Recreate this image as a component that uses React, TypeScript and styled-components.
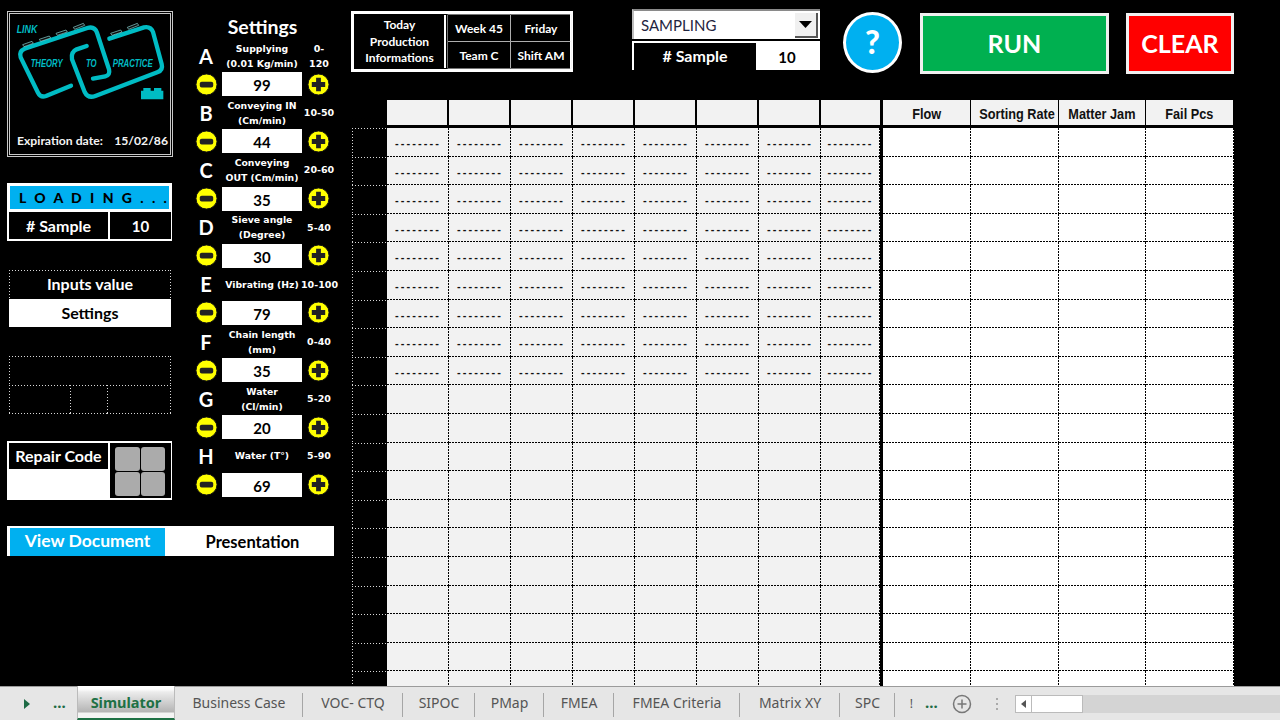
import styled, { createGlobalStyle, css } from "styled-components";
import { Fragment } from "react";

const GlobalStyle = createGlobalStyle`
  html, body { margin: 0; padding: 0; background: #000; }
  body { width: 1280px; height: 720px; overflow: hidden; font-family: "Lato", "Liberation Sans", sans-serif; }
  * { box-sizing: border-box; }
`;

const SETTINGS = [
  { letter: "A", label: ["Supplying", "(0.01 Kg/min)"], range: ["0-", "120"], value: 99 },
  { letter: "B", label: ["Conveying IN", "(Cm/min)"], range: ["10-50"], value: 44 },
  { letter: "C", label: ["Conveying", "OUT (Cm/min)"], range: ["20-60"], value: 35 },
  { letter: "D", label: ["Sieve angle", "(Degree)"], range: ["5-40"], value: 30 },
  { letter: "E", label: ["Vibrating (Hz)"], range: ["10-100"], value: 79 },
  { letter: "F", label: ["Chain length", "(mm)"], range: ["0-40"], value: 35 },
  { letter: "G", label: ["Water", "(Cl/min)"], range: ["5-20"], value: 20 },
  { letter: "H", label: ["Water (T°)"], range: ["5-90"], value: 69 },
];

const RESULTS = ["Flow", "Sorting Rate", "Matter Jam", "Fail Pcs"];
const ROW_COUNT = 20;
const FILLED_ROWS = 9;

const TABS = [
  { name: "Business Case", width: 128 },
  { name: "VOC- CTQ", width: 100 },
  { name: "SIPOC", width: 72 },
  { name: "PMap", width: 69 },
  { name: "FMEA", width: 70 },
  { name: "FMEA Criteria", width: 126 },
  { name: "Matrix XY", width: 100 },
  { name: "SPC", width: 55 },
];

// dotted white frame, the browser's own 1px dotted reads as a solid line
const dots = (sides: string[]) => {
  const h = "repeating-linear-gradient(90deg, #d8d8d8 0 1px, transparent 1px 3px)";
  const v = "repeating-linear-gradient(180deg, #d8d8d8 0 1px, transparent 1px 3px)";
  const layers: Record<string, string> = {
    top: `${h} top left / 100% 1px no-repeat`,
    bottom: `${h} bottom left / 100% 1px no-repeat`,
    left: `${v} top left / 1px 100% no-repeat`,
    right: `${v} top right / 1px 100% no-repeat`,
  };
  return css`
    background: ${sides.map((s) => layers[s]).join(", ")};
  `;
};

// sheet cell edges, 2 on 1 off
const cellEdges = css`
  background-image: repeating-linear-gradient(90deg, #000 0 2px, transparent 2px 3px),
    repeating-linear-gradient(180deg, #000 0 2px, transparent 2px 3px);
  background-position: bottom left, top right;
  background-size: 100% 1px, 1px 100%;
  background-repeat: no-repeat;
`;

const Logo = () => (
  <LogoSvg viewBox="30 42 480 279">
    <g fill="none" stroke="#00bcc4" strokeWidth="13" strokeLinecap="round" strokeLinejoin="round">
      <path d="M213 257 L138 288 Q122 294 114 278 L62 172 Q56 154 74 146 L262 84 Q284 78 291 98 L327 208 Q331 226 316 229 L279 236" />
      <path d="M328 116 L432 82 Q452 78 459 96 L485 192 Q490 210 472 217 L286 288 Q264 296 254 276 L216 178 Q212 156 230 148 L260 138" />
    </g>
    <g fill="#0b0b0b" stroke="#8fdcdc" strokeWidth="2">
      <path d="M68 134 L96 124 L100 130 L72 140 Z" />
      <path d="M118 118 L148 108 L152 114 L122 124 Z" />
      <path d="M168 100 L198 90 L202 96 L172 106 Z" />
      <path d="M220 82 L250 70 L254 76 L224 88 Z" />
      <path d="M332 100 L362 90 L366 96 L336 106 Z" />
      <path d="M382 82 L412 70 L416 76 L386 88 Z" />
    </g>
    <LogoText x="50" y="100" fontSize="30" textLength="62" lengthAdjust="spacingAndGlyphs">LINK</LogoText>
    <LogoText x="92" y="200" fontSize="34" textLength="96" lengthAdjust="spacingAndGlyphs">THEORY</LogoText>
    <LogoText x="258" y="200" fontSize="34" textLength="32" lengthAdjust="spacingAndGlyphs">TO</LogoText>
    <LogoText x="338" y="200" fontSize="34" textLength="120" lengthAdjust="spacingAndGlyphs">PRACTICE</LogoText>
    <path
      fill="#00bcc4"
      d="M423 272 H430 V264 H452 V272 H462 V264 H484 V272 H490 V298 H423 Z"
    />
  </LogoSvg>
);

const MinusIcon = () => (
  <RoundSvg viewBox="0 0 24 24">
    <circle cx="12" cy="12" r="11" fill="#ffff00" stroke="#111" strokeWidth="1" />
    <rect x="5" y="9" width="14" height="6" rx="2" fill="#222" />
  </RoundSvg>
);

const PlusIcon = () => (
  <RoundSvg viewBox="0 0 24 24">
    <circle cx="12" cy="12" r="11" fill="#ffff00" stroke="#111" strokeWidth="1" />
    <path
      fill="#222"
      d="M9.5 5 H14.5 V9.5 H19 V14.5 H14.5 V19 H9.5 V14.5 H5 V9.5 H9.5 Z"
    />
  </RoundSvg>
);

const App = () => {
  const rows = Array.from({ length: ROW_COUNT }, (_, i) => i);
  const columns = Array.from({ length: 8 }, (_, i) => i);

  return (
    <Page>
      <GlobalStyle />
      <Main>
        <LeftPanel>
          <LogoCard>
            <Logo />
            <Expiry>
              <span>Expiration date:</span>
              <span>15/02/86</span>
            </Expiry>
          </LogoCard>

          <LoadingBlock>
            <LoadingBar>L O A D I N G . . .</LoadingBar>
            <SampleRow>
              <SampleName># Sample</SampleName>
              <SampleCount>10</SampleCount>
            </SampleRow>
          </LoadingBlock>

          <InputsBlock>
            <InputsTitle>Inputs value</InputsTitle>
            <InputsValue>Settings</InputsValue>
          </InputsBlock>

          <EmptyBlock>
            <EmptyWide />
            <EmptySplit>
              <EmptyCell $width={62} />
              <EmptyCell $width={38} />
              <EmptyCell $width={64} />
            </EmptySplit>
          </EmptyBlock>

          <RepairBlock>
            <RepairLabel>Repair Code</RepairLabel>
            <RepairKeys>
              <RepairKey />
              <RepairKey />
              <RepairKey />
              <RepairKey />
            </RepairKeys>
          </RepairBlock>
        </LeftPanel>

        <SettingsPanel>
          <SettingsTitle>Settings</SettingsTitle>
          <SettingsGrid>
            {SETTINGS.map((s) => (
              <Fragment key={s.letter}>
                <Letter>{s.letter}</Letter>
                <ParamLabel>
                  {s.label.map((line) => (
                    <div key={line}>{line}</div>
                  ))}
                </ParamLabel>
                <ParamRange>
                  {s.range.map((line) => (
                    <div key={line}>{line}</div>
                  ))}
                </ParamRange>
                <MinusIcon />
                <ParamValue>{s.value}</ParamValue>
                <PlusIcon />
              </Fragment>
            ))}
          </SettingsGrid>
        </SettingsPanel>

        <DocBar>
          <DocActive>View Document</DocActive>
          <DocOther>Presentation</DocOther>
        </DocBar>

        <RightPanel>
          <TopBar>
            <InfoTable>
              <InfoTitle>
                Today
                <br />
                Production
                <br />
                Informations
              </InfoTitle>
              <InfoCell>Week 45</InfoCell>
              <InfoCell>Friday</InfoCell>
              <InfoCell>Team C</InfoCell>
              <InfoCell>Shift AM</InfoCell>
            </InfoTable>

            <ModeBlock>
              <Dropdown>
                <span>SAMPLING</span>
                <DropdownButton>
                  <svg width="13" height="7" viewBox="0 0 13 7">
                    <path d="M0 0 H13 L6.5 7 Z" fill="#000" />
                  </svg>
                </DropdownButton>
              </Dropdown>
              <ModeSample>
                <ModeSampleName># Sample</ModeSampleName>
                <ModeSampleCount>10</ModeSampleCount>
              </ModeSample>
            </ModeBlock>

            <HelpButton>?</HelpButton>
            <ActionButton $bg="#00b050" $width={189} $gap={18}>RUN</ActionButton>
            <ActionButton $bg="#ff0000" $width={108} $gap={17}>CLEAR</ActionButton>
          </TopBar>

          <SheetGrid>
            <HeaderSpacer />
            {columns.map((c) => (
              <HeaderCell key={c} $last={c === 7} />
            ))}
            {RESULTS.map((r) => (
              <ResultHeader key={r}>
                <NarrowText>{r}</NarrowText>
              </ResultHeader>
            ))}
            {rows.map((r) => (
              <Fragment key={r}>
                <RowHead />
                {columns.map((c) => (
                  <DataCell key={c} $last={c === 7}>
                    {r < FILLED_ROWS ? "--------" : ""}
                  </DataCell>
                ))}
                {RESULTS.map((name) => (
                  <ResultCell key={name} />
                ))}
              </Fragment>
            ))}
          </SheetGrid>
        </RightPanel>
      </Main>

      <TabBar>
        <NavArrow>
          <svg width="6" height="10" viewBox="0 0 6 10">
            <path d="M0 0 L6 5 L0 10 Z" fill="#1e6b45" />
          </svg>
        </NavArrow>
        <MoreDots>...</MoreDots>
        <ActiveTab>Simulator</ActiveTab>
        {TABS.map((t) => (
          <SheetTab key={t.name} $width={t.width}>
            {t.name}
          </SheetTab>
        ))}
        <ClippedTab>!</ClippedTab>
        <MoreDots>...</MoreDots>
        <AddSheet>
          <svg width="20" height="20" viewBox="0 0 20 20">
            <circle cx="10" cy="10" r="8.5" fill="none" stroke="#777" strokeWidth="1.5" />
            <path d="M10 5.5 V14.5 M5.5 10 H14.5" stroke="#777" strokeWidth="1.5" />
          </svg>
        </AddSheet>
        <Grip>
          <GripDot />
          <GripDot />
          <GripDot />
        </Grip>
        <ScrollTrack>
          <ScrollLeft>
            <svg width="5" height="8" viewBox="0 0 5 8">
              <path d="M5 0 L0 4 L5 8 Z" fill="#555" />
            </svg>
          </ScrollLeft>
          <ScrollThumb />
        </ScrollTrack>
      </TabBar>
    </Page>
  );
};

export default App;

const Page = styled.div`
  display: flex;
  flex-direction: column;
  width: 1280px;
  height: 720px;
  background: #000;
  overflow: hidden;
`;

const Main = styled.div`
  display: grid;
  grid-template-columns: 188px 163px 1fr;
  grid-template-rows: 517px 1fr;
  height: 686px;
  flex-shrink: 0;
  overflow: hidden;
  color: #fff;
`;

const LeftPanel = styled.div`
  display: flex;
  flex-direction: column;
  padding: 11px 0 0 7px;
`;

const LogoCard = styled.div`
  display: flex;
  flex-direction: column;
  width: 166px;
  height: 146px;
  border: 3px double #c8c8c8;
`;

const LogoSvg = styled.svg`
  display: block;
  width: 160px;
  height: 93px;
`;

const LogoText = styled.text`
  font-family: "Liberation Sans", sans-serif;
  font-style: italic;
  font-weight: 700;
  fill: #00bcc4;
`;

const Expiry = styled.div`
  display: flex;
  justify-content: space-between;
  margin-top: 26px;
  padding: 0 2px 0 7px;
  font-size: 12.2px;
  font-weight: 700;
  color: #f4f4f4;
`;

const LoadingBlock = styled.div`
  display: flex;
  flex-direction: column;
  width: 165px;
  margin-top: 26px;
`;

const LoadingBar = styled.div`
  height: 29px;
  padding-left: 9px;
  border: 3px solid #fff;
  background: #00b0f0;
  background-clip: padding-box;
  color: #000;
  font-size: 14px;
  font-weight: 900;
  letter-spacing: 2.5px;
  line-height: 23px;
  white-space: nowrap;
`;

const SampleRow = styled.div`
  display: grid;
  grid-template-columns: 101px 1fr;
  height: 29px;
  border: 1px solid #fff;
  border-top: 0;
  border-bottom-width: 2px;
  border-left-width: 2px;
`;

const SampleName = styled.div`
  display: flex;
  align-items: center;
  justify-content: center;
  border-right: 2px solid #fff;
  font-size: 16px;
  font-weight: 700;
`;

const SampleCount = styled.div`
  display: flex;
  align-items: center;
  justify-content: center;
  font-size: 15px;
  font-weight: 700;
`;

const InputsBlock = styled.div`
  display: flex;
  flex-direction: column;
  width: 162px;
  margin: 29px 0 0 2px;
`;

const InputsTitle = styled.div`
  ${dots(["top", "left", "right"])}
  height: 29px;
  text-align: center;
  font-size: 16px;
  font-weight: 700;
  line-height: 28px;
`;

const InputsValue = styled.div`
  height: 28px;
  background: #fff;
  color: #000;
  text-align: center;
  font-size: 16px;
  font-weight: 700;
  line-height: 27px;
`;

const EmptyBlock = styled.div`
  display: flex;
  flex-direction: column;
  width: 162px;
  margin: 29px 0 0 2px;
`;

const EmptyWide = styled.div`
  ${dots(["top", "left", "right"])}
  height: 29px;
`;

const EmptySplit = styled.div`
  display: flex;
  height: 29px;
`;

const EmptyCell = styled.div<{ $width: number }>`
  ${dots(["top", "bottom", "left", "right"])}
  width: ${({ $width }) => $width}px;
  margin-right: -1px;
`;

const RepairBlock = styled.div`
  display: grid;
  grid-template-columns: 101px 1fr;
  width: 165px;
  height: 59px;
  margin-top: 27px;
  padding: 2px 1px 2px 2px;
  background: #fff;
`;

const RepairLabel = styled.div`
  height: 26px;
  margin-right: 2px;
  background: #000;
  color: #fff;
  text-align: center;
  font-size: 16px;
  font-weight: 700;
  line-height: 26px;
`;

const RepairKeys = styled.div`
  display: grid;
  grid-template-columns: 1fr 1fr;
  grid-template-rows: 1fr 1fr;
  gap: 1px;
  padding: 4px 6px 2px 5px;
  background: #000;
`;

const RepairKey = styled.div`
  border-radius: 3px;
  background: #ababab;
`;

const SettingsPanel = styled.div`
  display: flex;
  flex-direction: column;
  padding-left: 7px;
`;

const SettingsTitle = styled.div`
  height: 39px;
  width: 135px;
  padding-top: 14px;
  text-align: center;
  font-size: 19.5px;
  font-weight: 700;
  line-height: 26px;
`;

const SettingsGrid = styled.div`
  display: grid;
  grid-template-columns: 22px 5px 80px 5px 25px;
  grid-auto-rows: 33.2px 24px;
  width: 145px;
`;

const Letter = styled.div`
  grid-column: 1;
  align-self: center;
  text-align: center;
  font-size: 20px;
  font-weight: 700;
  line-height: 24px;
`;

const ParamLabel = styled.div`
  grid-column: 2 / 5;
  align-self: center;
  display: flex;
  flex-direction: column;
  justify-content: center;
  height: 33px;
  text-align: center;
  white-space: nowrap;
  font-family: "DejaVu Sans", sans-serif;
  font-size: 9.3px;
  font-weight: 700;
  line-height: 15px;
  overflow: hidden;
`;

const ParamRange = styled.div`
  grid-column: 5;
  align-self: center;
  width: 36px;
  margin-left: -6px;
  text-align: center;
  white-space: nowrap;
  font-family: "DejaVu Sans", sans-serif;
  font-size: 9.5px;
  font-weight: 700;
  line-height: 15px;
`;

const RoundSvg = styled.svg`
  display: block;
  align-self: center;
  width: 23px;
  height: 23px;

  &:nth-child(6n + 4) {
    grid-column: 1;
  }

  &:nth-child(6n) {
    grid-column: 5;
  }
`;

const ParamValue = styled.div`
  grid-column: 3;
  background: #fff;
  color: #000;
  text-align: center;
  font-size: 15px;
  font-weight: 700;
  line-height: 26px;
`;

const DocBar = styled.div`
  grid-column: 1 / 3;
  display: grid;
  grid-template-columns: 155px 1fr;
  align-self: start;
  width: 327px;
  height: 30px;
  margin: 9px 0 0 7px;
  padding: 2px 0 3px 3px;
  background: #fff;
`;

const DocActive = styled.div`
  background: #00b0f0;
  color: #fff;
  text-align: center;
  font-size: 17.5px;
  font-weight: 700;
  line-height: 25px;
`;

const DocOther = styled.div`
  padding-left: 6px;
  color: #000;
  text-align: center;
  font-size: 16.5px;
  font-weight: 700;
  line-height: 28px;
`;

const RightPanel = styled.div`
  grid-column: 3;
  grid-row: 1 / 3;
  display: flex;
  flex-direction: column;
  padding-left: 1px;
`;

const TopBar = styled.div`
  display: flex;
  align-items: flex-start;
  flex-shrink: 0;
  height: 100px;
  margin-left: -1px;
  padding-top: 9px;
`;

const InfoTable = styled.div`
  display: grid;
  grid-template-columns: 92px 62px 60px;
  grid-template-rows: 1fr 1fr;
  gap: 1px;
  width: 222px;
  height: 61px;
  margin-top: 2px;
  padding: 1px;
  border: 3px solid #fff;
  background: #000;
`;

const InfoTitle = styled.div`
  grid-row: 1 / 3;
  margin-right: 1px;
  padding-top: 2px;
  border-right: 2px solid #fff;
  text-align: center;
  font-size: 12px;
  font-weight: 700;
  line-height: 16.5px;
`;

const InfoCell = styled.div`
  display: flex;
  align-items: center;
  justify-content: center;
  box-shadow: 0 0 0 0.5px #e8e8e8;
  font-size: 12px;
  font-weight: 700;
`;

const ModeBlock = styled.div`
  display: flex;
  flex-direction: column;
  gap: 2px;
  width: 188px;
  margin-left: 59px;
`;

const Dropdown = styled.div`
  display: flex;
  align-items: center;
  justify-content: space-between;
  height: 30px;
  padding: 0 2px 0 7px;
  border-top: 2px solid #8a8a8a;
  border-left: 2px solid #bdbdbd;
  background: #fff;
  color: #1f2440;
  font-size: 15px;
`;

const DropdownButton = styled.div`
  display: flex;
  align-items: center;
  justify-content: center;
  width: 23px;
  height: 25px;
  border-right: 2px solid #555;
  border-bottom: 2px solid #555;
  background: #f0f0f0;
`;

const ModeSample = styled.div`
  display: grid;
  grid-template-columns: 122px 1fr;
  height: 29px;
  border: 2px solid #fff;
  background: #fff;
`;

const ModeSampleName = styled.div`
  background: #000;
  color: #fff;
  text-align: center;
  font-size: 16px;
  font-weight: 700;
  line-height: 26px;
`;

const ModeSampleCount = styled.div`
  color: #000;
  text-align: center;
  font-size: 15px;
  font-weight: 700;
  line-height: 28px;
`;

const HelpButton = styled.div`
  width: 59px;
  height: 61px;
  margin: 3px 0 0 23px;
  border: 3px solid #fff;
  border-radius: 50%;
  background: #00b0f0;
  color: #fff;
  text-align: center;
  font-size: 32px;
  font-weight: 900;
  line-height: 54px;
`;

const ActionButton = styled.div<{ $bg: string; $width: number; $gap: number }>`
  width: ${({ $width }) => $width}px;
  height: 61px;
  margin: 4px 0 0 ${({ $gap }) => $gap}px;
  border: 3px solid #f0f0f0;
  background: ${({ $bg }) => $bg};
  color: #fff;
  text-align: center;
  font-size: 25px;
  font-weight: 700;
  line-height: 55px;
`;

const SheetGrid = styled.div`
  display: grid;
  grid-template-columns: 35px repeat(8, 62px) repeat(4, 87.75px);
  grid-template-rows: 28px;
  grid-auto-rows: 28.6px;
  flex-shrink: 0;
  width: 882px;
`;

const HeaderSpacer = styled.div``;

const HeaderCell = styled.div<{ $last?: boolean }>`
  margin-right: ${({ $last }) => ($last ? "3px" : "2px")};
  border-bottom: 3px solid #000;
  background: #f2f2f2;
  background-clip: padding-box;
`;

const ResultHeader = styled.div`
  margin-right: 1px;
  border-bottom: 3px solid #000;
  background: #f2f2f2;
  background-clip: padding-box;
  color: #111;
  text-align: center;
  white-space: nowrap;
  font-family: "Liberation Sans", sans-serif;
  font-size: 15.5px;
  font-weight: 700;
  line-height: 27px;
  overflow: hidden;
`;

const NarrowText = styled.span`
  display: inline-block;
  transform: scaleX(0.82);
`;

const RowHead = styled.div`
  ${dots(["top", "left"])}
`;

const DataCell = styled.div<{ $last?: boolean }>`
  background-color: #f2f2f2;
  ${cellEdges}
  ${({ $last }) => $last && "border-right: 3px solid #000;"}
  color: #111;
  text-align: center;
  white-space: nowrap;
  font-family: "Liberation Sans", sans-serif;
  font-size: 11px;
  font-weight: 700;
  letter-spacing: 2.08px;
  line-height: 30px;
  overflow: hidden;
`;

const ResultCell = styled.div`
  background-color: #fff;
  ${cellEdges}
`;

const TabBar = styled.div`
  display: flex;
  align-items: center;
  height: 34px;
  padding-left: 24px;
  border-top: 1px solid #9b9b9b;
  background: #e6e6e6;
  color: #555;
  font-family: "Noto Sans", sans-serif;
  font-size: 14px;
`;

const NavArrow = styled.div`
  display: flex;
  width: 29px;
`;

const MoreDots = styled.div`
  width: 24px;
  margin-top: -4px;
  color: #1e6b45;
  font-size: 15px;
  font-weight: 700;
`;

const ActiveTab = styled.div`
  align-self: stretch;
  width: 98px;
  margin-top: -1px;
  padding-top: 6px;
  border-right: 1px solid #bbb;
  border-bottom: 2px solid #1e7145;
  border-left: 1px solid #bbb;
  background: linear-gradient(#ffffff 0 3px, #ececec 6px, #b4b4b4 26px, #f4f4f4 27px);
  color: #1e7145;
  text-align: center;
  font-size: 14.5px;
  font-weight: 700;
  line-height: 20px;
`;

const SheetTab = styled.div<{ $width: number }>`
  position: relative;
  width: ${({ $width }) => $width}px;
  margin-top: -2px;
  text-align: center;
  white-space: nowrap;

  &::after {
    content: "";
    position: absolute;
    top: 0;
    right: 0;
    width: 1px;
    height: 24px;
    background: #a6a6a6;
  }
`;

const ClippedTab = styled.div`
  width: 30px;
  padding-right: 12px;
  text-align: right;
  font-size: 12px;
`;

const AddSheet = styled.div`
  display: flex;
  width: 20px;
  margin-left: 3px;
`;

const Grip = styled.div`
  display: flex;
  flex-direction: column;
  gap: 3px;
  width: 2px;
  margin-left: 24px;
`;

const GripDot = styled.div`
  width: 2px;
  height: 2px;
  background: #aaa;
`;

const ScrollTrack = styled.div`
  display: flex;
  flex: 1;
  height: 18px;
  margin-left: 17px;
  background: #d4d4d4;
`;

const ScrollLeft = styled.div`
  display: flex;
  align-items: center;
  justify-content: center;
  width: 17px;
  border: 1px solid #bbb;
  background: #fff;
`;

const ScrollThumb = styled.div`
  width: 51px;
  border: 1px solid #bbb;
  border-left: 0;
  background: #fff;
`;
